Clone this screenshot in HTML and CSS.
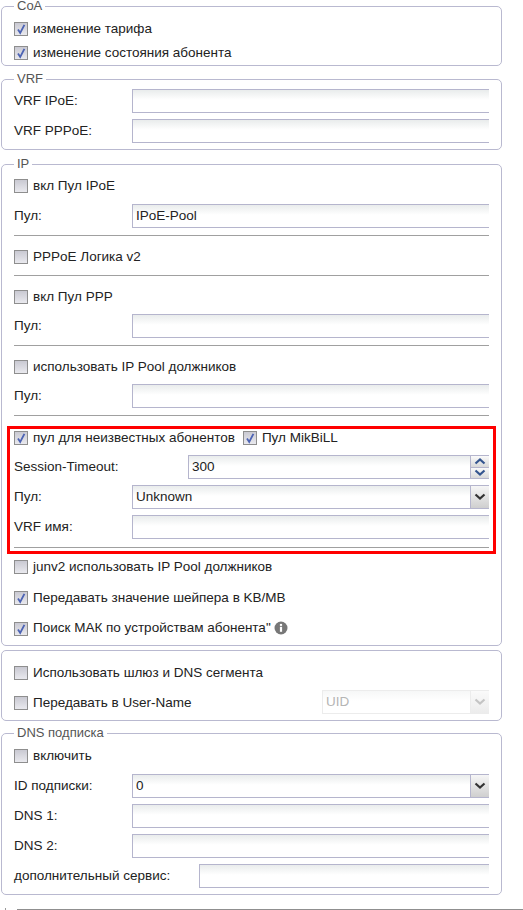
FILE: index.html
```html
<!DOCTYPE html>
<html lang="ru">
<head>
<meta charset="utf-8">
<title>Настройки</title>
<link rel="stylesheet" href="styles.css">
</head>
<body>
<svg class="defs" width="0" height="0" aria-hidden="true">
  <symbol id="tick" viewBox="0 0 14 14"><path d="M4 7.6 L6.2 11 L10.4 2.8" fill="none" stroke="#4c63b4" stroke-width="1.8"/></symbol>
  <symbol id="down" viewBox="0 0 12 8"><path d="M1.5 1.5 L6 5.5 L10.5 1.5" fill="none" stroke="currentColor" stroke-width="2.2"/></symbol>
  <symbol id="up" viewBox="0 0 12 8"><path d="M1.5 6.5 L6 2.5 L10.5 6.5" fill="none" stroke="currentColor" stroke-width="2.2"/></symbol>
</svg>

<fieldset class="fs fs-coa">
  <legend>CoA</legend>
  <div class="row row-tight"><span class="cb"><svg><use href="#tick"/></svg></span><span>изменение тарифа</span></div>
  <div class="row row-tight"><span class="cb"><svg><use href="#tick"/></svg></span><span>изменение состояния абонента</span></div>
</fieldset>

<fieldset class="fs fs-vrf">
  <legend>VRF</legend>
  <div class="row"><label class="lab">VRF IPoE:</label><div class="field"><input type="text"></div></div>
  <div class="row"><label class="lab">VRF PPPoE:</label><div class="field"><input type="text"></div></div>
</fieldset>

<fieldset class="fs fs-ip">
  <legend>IP</legend>
  <div class="row"><span class="cb"></span><span>вкл Пул IPoE</span></div>
  <div class="row row-gap7"><label class="lab">Пул:</label><div class="field"><input type="text" value="IPoE-Pool"></div></div>
  <hr class="sep">
  <div class="row row-flush"><span class="cb"></span><span>PPPoE Логика v2</span></div>
  <hr class="sep">
  <div class="row row-flush"><span class="cb"></span><span>вкл Пул PPP</span></div>
  <div class="row"><label class="lab">Пул:</label><div class="field"><input type="text"></div></div>
  <hr class="sep">
  <div class="row row-flush"><span class="cb"></span><span>использовать IP Pool должников</span></div>
  <div class="row"><label class="lab">Пул:</label><div class="field"><input type="text"></div></div>
  <hr class="sep">

  <div class="marked">
    <div class="row row-first">
      <span class="cb"><svg><use href="#tick"/></svg></span><span>пул для неизвестных абонентов</span>
      <span class="cb cb-next"><svg><use href="#tick"/></svg></span><span>Пул MikBiLL</span>
    </div>
    <div class="row row-session"><label class="lab lab-wide">Session-Timeout:</label>
      <div class="field"><input type="text" value="300">
        <div class="spin"><span class="spin-b"><svg><use href="#up"/></svg></span><span class="spin-b"><svg><use href="#down"/></svg></span></div>
      </div>
    </div>
    <div class="row"><label class="lab">Пул:</label>
      <div class="field"><select><option>Unknown</option></select><span class="arrow"><svg><use href="#down"/></svg></span></div>
    </div>
    <div class="row"><label class="lab">VRF имя:</label><div class="field"><input type="text"></div></div>
    <hr class="sep sep-last">
  </div>

  <div class="row row-flush"><span class="cb"></span><span>junv2 использовать IP Pool должников</span></div>
  <div class="row row-gap7"><span class="cb"><svg><use href="#tick"/></svg></span><span>Передавать значение шейпера в KB/MB</span></div>
  <div class="row row-gap7"><span class="cb"><svg><use href="#tick"/></svg></span><span class="up1">Поиск МАК по устройствам абонента"</span>
    <svg class="info" viewBox="0 0 14 14"><circle cx="7" cy="7" r="6.5" fill="#777"/><rect x="5.9" y="5.8" width="2.2" height="5" fill="#fff"/><rect x="5.9" y="2.9" width="2.2" height="2" fill="#fff"/></svg>
  </div>
</fieldset>

<fieldset class="fs fs-seg">
  <div class="row"><span class="cb"></span><span>Использовать шлюз и DNS сегмента</span></div>
  <div class="row"><span class="cb"></span><span>Передавать в User-Name</span>
    <div class="field field-off"><select disabled><option>UID</option></select><span class="arrow"><svg><use href="#down"/></svg></span></div>
  </div>
</fieldset>

<fieldset class="fs fs-dns">
  <legend>DNS подписка</legend>
  <div class="row"><span class="cb"></span><span>включить</span></div>
  <div class="row row-gap7"><label class="lab">ID подписки:</label>
    <div class="field"><select><option>0</option></select><span class="arrow"><svg><use href="#down"/></svg></span></div>
  </div>
  <div class="row"><label class="lab">DNS 1:</label><div class="field"><input type="text"></div></div>
  <div class="row"><label class="lab">DNS 2:</label><div class="field"><input type="text"></div></div>
  <div class="row"><label class="lab lab-xl">дополнительный сервис:</label><div class="field"><input type="text"></div></div>
</fieldset>

<div class="next-edge"></div>
</body>
</html>
```
FILE: styles.css
```css
* { box-sizing: border-box; }
html, body { margin: 0; padding: 0; height: 910px; overflow: hidden; background: #fff; }
body { font: 13.5px/15px "Liberation Sans", Arial, sans-serif; color: #222; }
.defs { position: absolute; }

.fs {
  width: 501px;
  margin: 0 0 0 1px;
  padding: 0 12px 0 12px;
  border: 1px solid #b9b9d0;
  border-radius: 5px;
  min-width: 0;
}
.fs legend {
  padding: 0 3px;
  margin: 0;
  font-size: 13px;
  line-height: 12px;
  color: #555;
}
.fs-coa { padding-top: 4px; padding-bottom: 1px; }
.fs-vrf { margin-top: 7px; padding-bottom: 6px; }
.fs-ip { margin-top: 8px; padding-bottom: 5px; padding-top: 3px; }
.fs-seg { margin-top: 4px; padding-top: 9px; padding-bottom: 6px; }
.fs-dns { margin-top: 6px; padding-top: 4px; padding-bottom: 6px; }

.row {
  display: flex;
  align-items: center;
  height: 24px;
  margin-top: 6px;
}
.row:first-of-type { margin-top: 0; }
.fs-vrf .row:first-of-type { margin-top: 4px; }
.row.row-tight { height: 24px; margin-top: 0; }
.row.row-first { height: 16px; margin-top: 0; }
.row.row-session { margin-top: 10px; }
.row.row-flush { margin-top: 0; }
.row.row-gap7 { margin-top: 7px; }

.lab { width: 118px; flex: none; padding-bottom: 2px; }
.lab-wide { width: 174px; }
.lab-xl { width: 185px; }
.up1 { padding-bottom: 2px; }

.cb {
  flex: none;
  width: 14px;
  height: 14px;
  margin: 2px 5px 0 0;
  border: 1px solid #8e8e8e;
  background: linear-gradient(#c9c9d2, #e9e9ee);
  position: relative;
}
.cb svg { position: absolute; left: -1px; top: -1px; width: 14px; height: 14px; display: block; }
.cb.cb-next { margin-left: 8px; }

.field {
  flex: 1;
  display: flex;
  height: 24px;
  min-width: 0;
  border: 1px solid #b5b5cd;
  border-right: 0;
  background: linear-gradient(#e9ecec, #fff 45%);
}
.field input, .field select {
  flex: 1;
  min-width: 0;
  height: 100%;
  border: 0;
  padding: 0 3px 2px;
  margin: 0;
  background: transparent;
  font: inherit;
  color: #222;
  outline: 0;
  appearance: none;
  border-radius: 0;
}
.arrow {
  flex: none;
  width: 19px;
  border-left: 1px solid #b5b5cd;
  background: linear-gradient(#f6f6f6, #cfcfcf);
  color: #333;
  display: flex;
  align-items: center;
  justify-content: center;
}
.arrow svg { width: 12px; height: 8px; }
.spin { flex: none; width: 19px; display: flex; flex-direction: column; border-left: 1px solid #b5b5cd; }
.spin-b {
  flex: 1;
  display: flex;
  align-items: center;
  justify-content: center;
  background: linear-gradient(#fafafa, #d9d9d9);
  color: #34558f;
}
.spin-b + .spin-b { border-top: 1px solid #b5b5cd; }
.spin-b svg { width: 12px; height: 8px; }

.field.field-off { flex: none; width: 167px; margin-left: auto; border-color: #ececec; background: linear-gradient(#f6f7f7, #fff 45%); }
.field-off select { color: #b5b5b5; opacity: 1; }
.field-off .arrow { border-color: #ececec; background: linear-gradient(#fafafa, #ececec); color: #c4c4c4; }

.sep { height: 1px; margin: 6.5px 0 8.5px; border: 0; background: #a0a0a0; }
.marked {
  margin: 10.5px -7px 0;
  padding: 0 4px;
  border: 3px solid #f00;
  height: 128px;
}
.sep.sep-last { margin: 8px 0 0; }

.info { width: 14px; height: 14px; margin-left: 3px; flex: none; }

.next-edge {
  position: relative;
  margin: 14px 0 0 17px;
  height: 2px;
  background: #8f8f8f;
}
.next-edge::before {
  content: "";
  position: absolute;
  left: -12px;
  top: -1px;
  width: 1px;
  height: 2px;
  background: #999;
}
```
